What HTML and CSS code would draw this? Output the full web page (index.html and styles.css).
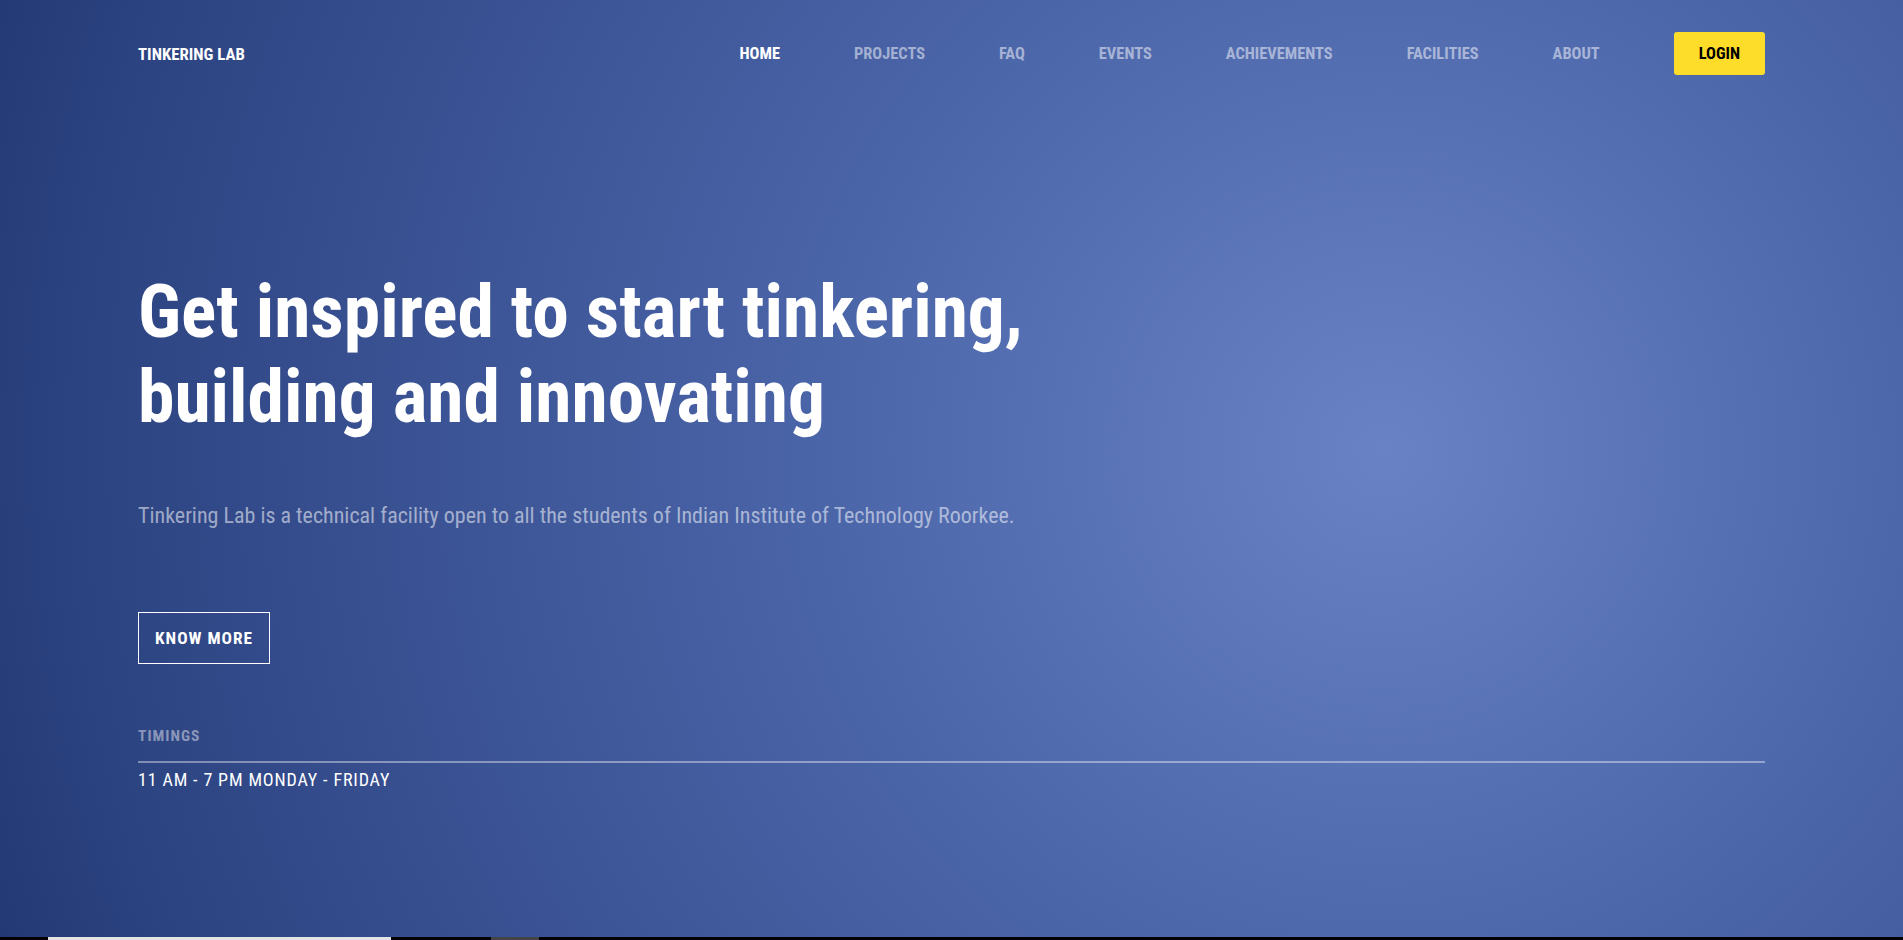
FILE: index.html
```html
<!DOCTYPE html>
<html lang="en">
<head>
<meta charset="utf-8">
<title>Tinkering Lab</title>
<link rel="stylesheet" href="styles.css">
</head>
<body>
<div class="page">
  <header class="topbar">
    <a class="brand" href="#">TINKERING LAB</a>
    <nav class="nav">
      <a class="nav-link active" href="#">HOME</a>
      <a class="nav-link" href="#">PROJECTS</a>
      <a class="nav-link" href="#">FAQ</a>
      <a class="nav-link" href="#">EVENTS</a>
      <a class="nav-link" href="#">ACHIEVEMENTS</a>
      <a class="nav-link" href="#">FACILITIES</a>
      <a class="nav-link" href="#">ABOUT</a>
      <a class="login" href="#">LOGIN</a>
    </nav>
  </header>
  <main class="hero">
    <h1 class="hero-title">Get inspired to start tinkering,<br>building and innovating</h1>
    <p class="hero-text">Tinkering Lab is a technical facility open to all the students of Indian Institute of Technology Roorkee.</p>
    <a class="know-more" href="#">KNOW MORE</a>
    <div class="timings">
      <div class="timings-label">TIMINGS</div>
      <div class="timings-value">11 AM - 7 PM MONDAY - FRIDAY</div>
    </div>
  </main>
  <div class="progress">
    <span class="seg seg-light"></span>
    <span class="seg seg-dark"></span>
  </div>
</div>
</body>
</html>
```
FILE: styles.css
```css
* { box-sizing: border-box; }
html, body { margin: 0; padding: 0; }
body {
  font-family: "Roboto Condensed", "Roboto", sans-serif;
  font-stretch: condensed;
  color: #fff;
  background: #000;
}
a { text-decoration: none; color: inherit; }
.page {
  height: 940px;
  display: flex;
  flex-direction: column;
  background: radial-gradient(circle at 1384px 450px, #6882c5 0, #4b65a9 560px, #2c4381 1310px, #203773 1500px);
}
.topbar {
  display: flex;
  align-items: center;
  justify-content: space-between;
  padding: 32px 138px 0 138px;
  height: 75px;
}
.brand {
  font-weight: 700;
  font-size: 16.8px;
  color: #fff;
}
.nav {
  display: flex;
  align-items: center;
  gap: 74px;
}
.nav-link {
  font-weight: 700;
  font-size: 16.4px;
  color: rgba(255, 255, 255, 0.5);
}
.nav-link.active { color: #fff; }
.login {
  display: block;
  background: #fedd2a;
  color: #000;
  font-weight: 700;
  font-size: 16.4px;
  height: 43px;
  line-height: 43px;
  padding: 0 25px;
  border-radius: 3px;
}
.hero {
  flex: 1;
  padding: 195px 138px 0 138px;
  display: flex;
  flex-direction: column;
  align-items: flex-start;
}
.hero-title {
  margin: 0;
  font-size: 73.5px;
  line-height: 85px;
  font-weight: 700;
}
.hero-text {
  margin: 61px 0 0 0;
  font-size: 22px;
  line-height: 30px;
  font-weight: 400;
  color: rgba(255, 255, 255, 0.55);
}
.know-more {
  margin-top: 81px;
  border: 1px solid #fff;
  padding: 0 16px;
  height: 52px;
  line-height: 50px;
  font-size: 17.3px;
  font-weight: 700;
  letter-spacing: 1px;
}
.timings {
  align-self: stretch;
  margin-top: 63px;
}
.timings-label {
  font-size: 15.5px;
  font-weight: 700;
  letter-spacing: 1px;
  color: rgba(255, 255, 255, 0.45);
  padding-bottom: 16px;
  border-bottom: 2px solid rgba(255, 255, 255, 0.4);
}
.timings-value {
  margin-top: 6px;
  font-size: 18px;
  letter-spacing: 0.85px;
}
.progress {
  height: 3px;
  background: #000;
  display: flex;
}
.seg { display: block; height: 3px; }
.seg-light { margin-left: 48px; width: 343px; background: #e4e4e4; }
.seg-dark { margin-left: 100px; width: 48px; background: #444; }
```
